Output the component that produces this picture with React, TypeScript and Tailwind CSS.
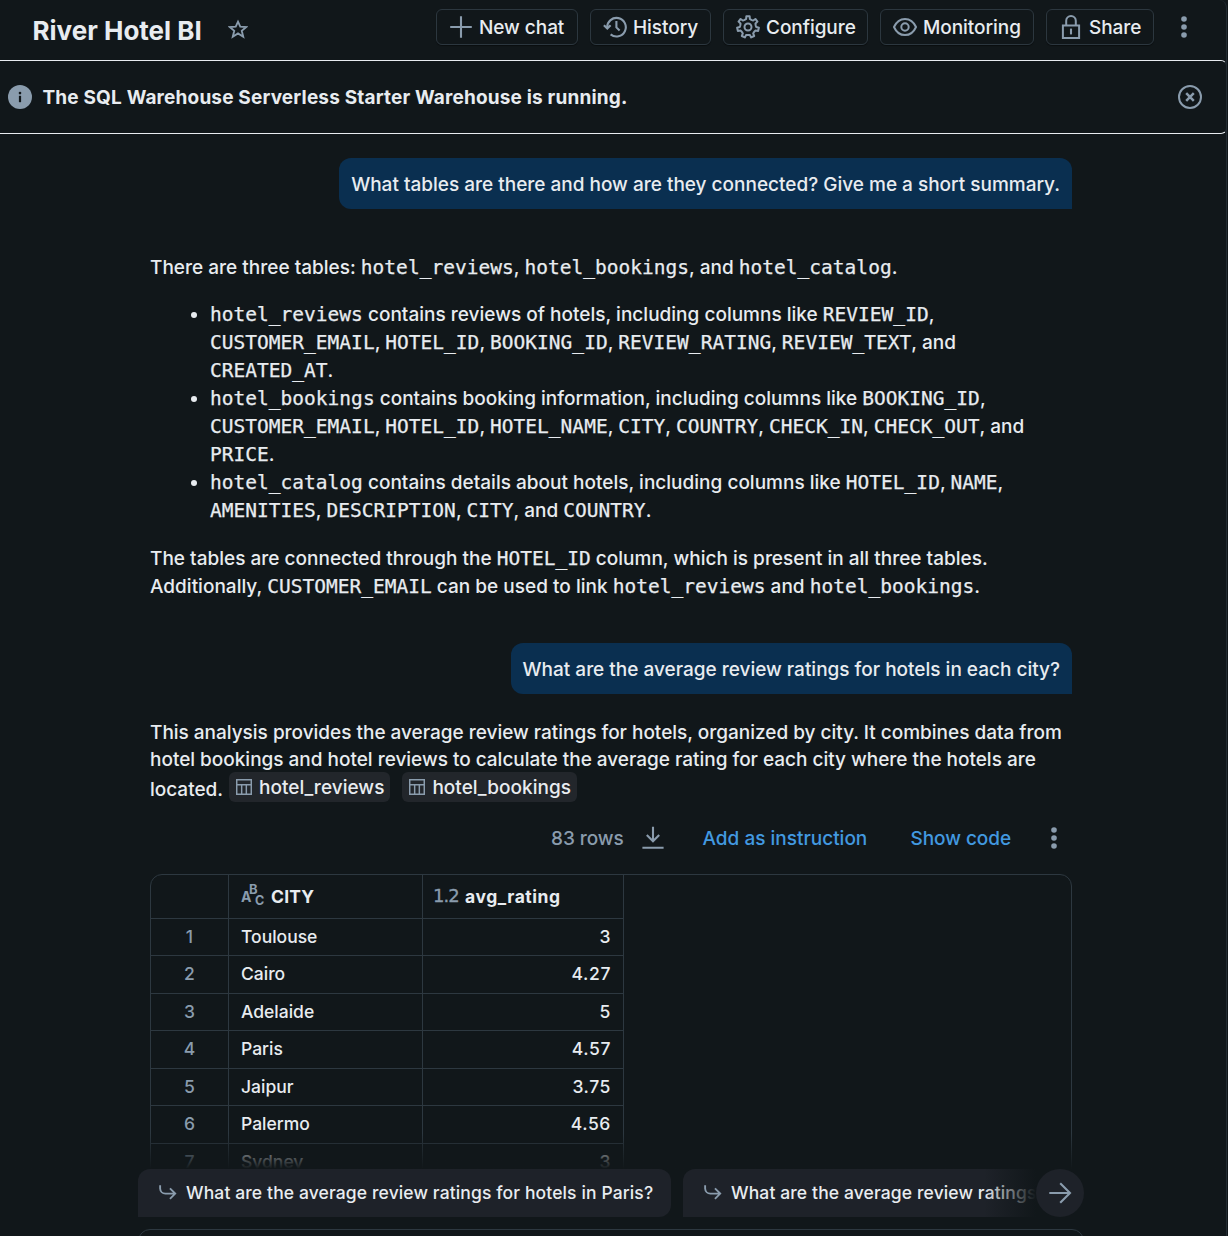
import React from 'react';

const GEAR_TEETH = 7;

function gearPath() {
  const step = (Math.PI * 2) / GEAR_TEETH;
  const profile: [number, number][] = [
    [-0.42, 7.9],
    [-0.25, 8.3],
    [-0.17, 10.9],
    [0.17, 10.9],
    [0.25, 8.3],
    [0.42, 7.9],
  ];
  const points: string[] = [];
  for (let i = 0; i < GEAR_TEETH; i += 1) {
    for (const [offset, radius] of profile) {
      const angle = -Math.PI / 2 + (i + offset) * step;
      points.push(`${(12 + radius * Math.cos(angle)).toFixed(2)} ${(12 + radius * Math.sin(angle)).toFixed(2)}`);
    }
  }
  return `M${points.join('L')}Z`;
}

const GEAR = gearPath();

function Icon({ children, className = 'size-6' }: { children: React.ReactNode; className?: string }) {
  return (
    <svg viewBox="0 0 24 24" fill="none" stroke="#8a9cad" strokeWidth="2.1" className={`${className} shrink-0`}>
      {children}
    </svg>
  );
}

const PlusIcon = () => (
  <Icon>
    <path d="M12 1.2V22.8M1.2 12H22.8" />
  </Icon>
);

const HistoryIcon = () => (
  <Icon>
    <path d="M4.2 12.5A9.3 9.3 0 1 1 7.6 19.4" />
    <path d="M0.9 10.2L4.3 13.6L7.6 10.2" />
    <path d="M13.4 6V12.4L16.6 15.6" />
  </Icon>
);

const GearIcon = () => (
  <Icon>
    <path d={GEAR} strokeWidth="2" strokeLinejoin="round" />
    <circle cx="12" cy="12" r="3.5" strokeWidth="2" />
  </Icon>
);

const EyeIcon = () => (
  <Icon>
    <path d="M1 12C3.2 7 7.2 3.9 12 3.9S20.8 7 23 12C20.8 17 16.8 20.1 12 20.1S3.2 17 1 12Z" strokeWidth="2" />
    <circle cx="12" cy="12" r="3.7" strokeWidth="2" />
  </Icon>
);

const LockIcon = () => (
  <Icon>
    <path d="M3.9 10.6H20.1V22.9H3.9Z" strokeWidth="2" />
    <path d="M7.2 10.6V5.8A4.8 4.8 0 0 1 16.8 5.8V10.6" strokeWidth="2" />
    <path d="M12 13.6V19.4" />
  </Icon>
);

const StarIcon = () => (
  <Icon className="size-5">
    <path
      d="M12 3.2L14.7 9.1L21.9 9.7L16.5 14.1L18.3 21.2L12 17.3L5.7 21.2L7.5 14.1L2.1 9.7L9.3 9.1Z"
      strokeWidth="2.2"
    />
  </Icon>
);

const KebabIcon = () => (
  <Icon>
    <g fill="#8a9cad" stroke="none">
      <circle cx="12" cy="4" r="2.8" />
      <circle cx="12" cy="12" r="2.8" />
      <circle cx="12" cy="20" r="2.8" />
    </g>
  </Icon>
);

const InfoIcon = () => (
  <Icon>
    <circle cx="12" cy="12" r="12" fill="#8a9cad" stroke="none" />
    <path d="M12 10.8V17.2" stroke="#11171a" strokeWidth="2.2" />
    <circle cx="12" cy="8.1" r="1.3" fill="#11171a" stroke="none" />
  </Icon>
);

const CloseCircleIcon = () => (
  <Icon>
    <circle cx="12" cy="12" r="11" strokeWidth="2" />
    <path d="M8.2 8.2L15.8 15.8M15.8 8.2L8.2 15.8" strokeWidth="2.5" />
  </Icon>
);

const TableIcon = () => (
  <Icon className="size-4">
    <path d="M1.1 1.1H22.9V22.9H1.1ZM1.1 8.6H22.9M8.5 8.6V22.9M15.5 8.6V22.9" strokeWidth="2.2" />
  </Icon>
);

const DownloadIcon = () => (
  <Icon>
    <path d="M12 0.8V15M5.8 9L12 15.2L18.2 9M1.4 21.8H22.6" />
  </Icon>
);

const ReturnIcon = () => (
  <Icon className="h-[18px] w-[20px]">
    <path d="M1.5 1.5V6A7 7 0 0 0 8.5 12.8H21.5M14.6 5.8L21.6 12.8L14.6 19.8" strokeWidth="2.5" />
  </Icon>
);

const ArrowRightIcon = () => (
  <Icon>
    <path d="M1.3 12H22M12.2 2.2L22 12L12.2 21.8" />
  </Icon>
);

const TextTypeIcon = () => (
  <svg
    viewBox="0 0 24 24"
    className="size-6 shrink-0 overflow-visible"
    fill="#8a9cad"
    fontFamily="Inter, sans-serif"
    fontWeight="700"
  >
    <text x="0" y="20.4" fontSize="14">A</text>
    <text x="8" y="12" fontSize="13">B</text>
    <text x="14" y="22.6" fontSize="12.5">C</text>
  </svg>
);

function HeaderButton({ icon, label, width }: { icon: React.ReactNode; label: string; width: string }) {
  return (
    <button
      className={`${width} flex h-9 items-center gap-[6px] rounded-md border border-[#2c373f] pl-3 text-[19px] font-medium tracking-[-0.05px] whitespace-nowrap shadow-[0_1px_1px_rgba(0,0,0,0.4)]`}
    >
      {icon}
      <span className="pt-[2px]">{label}</span>
    </button>
  );
}

function Code({ children }: { children: string }) {
  return (
    <code className="font-['DejaVu_Sans_Mono',monospace] text-[19.5px] leading-none tracking-[0.02px] [-webkit-text-stroke:0.25px_currentColor]">
      {children}
    </code>
  );
}

function CodeList({ items }: { items: string[] }) {
  return (
    <>
      {items.map((item, i) => (
        <React.Fragment key={item}>
          {i > 0 && ', '}
          <Code>{item}</Code>
        </React.Fragment>
      ))}
    </>
  );
}

function Bubble({ children }: { children: string }) {
  return (
    <div className="self-end rounded-xl rounded-br-none bg-[#0a2f50] pt-[13px] pr-[12px] pb-[11px] pl-[12px] text-[19px] leading-[27px] tracking-[-0.003px] whitespace-nowrap">
      {children}
    </div>
  );
}

function TableChip({ name }: { name: string }) {
  return (
    <span className="mr-3 inline-flex h-[30px] items-center gap-[7px] rounded-md bg-[#22262b] pr-1.5 pl-[7px] tracking-[0.03px]">
      <TableIcon />
      {name}
    </span>
  );
}

const rows: [string, string][] = [
  ['Toulouse', '3'],
  ['Cairo', '4.27'],
  ['Adelaide', '5'],
  ['Paris', '4.57'],
  ['Jaipur', '3.75'],
  ['Palermo', '4.56'],
  ['Sydney', '3'],
];

function ResultTable() {
  return (
    <div className="h-[420px] w-[922px] overflow-hidden rounded-xl border border-[#2d3840] text-[17.5px]">
      <div className="grid h-[43.5px] w-[473px] grid-cols-[78px_194px_201px]">
        <div className="border-r border-b border-[#2d3840]" />
        <div className="flex items-center gap-[6px] border-r border-b border-[#2d3840] pl-3 font-[650]">
          <div className="-mt-1">
            <TextTypeIcon />
          </div>
          <span className="pt-px tracking-[0.2px]">CITY</span>
        </div>
        <div className="flex items-center gap-[6px] border-r border-b border-[#2d3840] pl-[10px] font-[650]">
          <span className="-mt-0.5 w-[26px] font-['DejaVu_Sans',sans-serif] text-[18px] font-normal tracking-[-0.9px] text-[#8a9cad] [-webkit-text-stroke:0.3px_currentColor]">
            1.2
          </span>
          <span className="pt-px tracking-[0.55px]">avg_rating</span>
        </div>
      </div>
      {rows.map(([city, rating], i) => (
        <div key={city} className="grid h-[37.5px] w-[473px] grid-cols-[78px_194px_201px] leading-[36px]">
          <div className="border-r border-b border-[#2d3840] text-center text-[#8a9cad]">{i + 1}</div>
          <div className="border-r border-b border-[#2d3840] pl-3">{city}</div>
          <div className="border-r border-b border-[#2d3840] pr-3 text-right tracking-[0.6px]">{rating}</div>
        </div>
      ))}
    </div>
  );
}

function Suggestion({ text, className }: { text: string; className: string }) {
  return (
    <div
      className={`${className} flex h-12 shrink-0 items-center gap-[8px] rounded-xl rounded-bl-none bg-[#1e2229] pl-5 text-[17.5px] tracking-[0.12px] whitespace-nowrap`}
    >
      <ReturnIcon />
      {text}
    </div>
  );
}

export default function App() {
  return (
    <div className="h-[1236px] w-[1228px] overflow-hidden bg-[#11171a] font-['Inter',sans-serif] font-[450] text-[#e8ecf0]">
      <div className="flex h-[1236px] w-[1227px] flex-col rounded-tr-lg border-r border-[#232c33]">
        <header className="flex h-[60px] shrink-0 pl-[32.5px]">
          <h1 className="mt-[13px] w-[195px] text-[26px] leading-9 font-[650]">River Hotel BI</h1>
          <div className="mt-[19px]">
            <StarIcon />
          </div>
          <div className="mt-[9px] ml-auto flex gap-3">
            <HeaderButton icon={<PlusIcon />} label="New chat" width="w-[142px]" />
            <HeaderButton icon={<HistoryIcon />} label="History" width="w-[121px]" />
            <HeaderButton icon={<GearIcon />} label="Configure" width="w-[145px]" />
            <HeaderButton icon={<EyeIcon />} label="Monitoring" width="w-[154px]" />
            <HeaderButton icon={<LockIcon />} label="Share" width="w-[108px]" />
          </div>
          <div className="mt-[15px] mr-[30px] ml-[18px]">
            <KebabIcon />
          </div>
        </header>

        <div className="flex h-[74px] w-[1227px] shrink-0 items-center rounded-r-md border-y border-r border-y-[#e8ecf0] border-r-[#232c33] pr-[24px] pl-2">
          <InfoIcon />
          <p className="ml-[10.5px] pt-[2px] text-[19px] font-[660] tracking-[0.17px]">
            The SQL Warehouse Serverless Starter Warehouse is running.
          </p>
          <div className="ml-auto">
            <CloseCircleIcon />
          </div>
        </div>

        <main className="relative h-[1035px] shrink-0 overflow-hidden pl-[150px]">
          <div className="flex w-[922px] flex-col pt-6">
            <Bubble>What tables are there and how are they connected? Give me a short summary.</Bubble>

            <div className="mt-[45px] text-[19px] leading-7 tracking-[0.01px] whitespace-nowrap">
              <p>
                There are three tables: <CodeList items={['hotel_reviews', 'hotel_bookings']} />, and{' '}
                <Code>hotel_catalog</Code>.
              </p>
              <ul className="mt-[19px] list-disc pl-[60px]">
                <li>
                  <Code>hotel_reviews</Code> contains reviews of hotels, including columns like <Code>REVIEW_ID</Code>,
                  <br />
                  <CodeList items={['CUSTOMER_EMAIL', 'HOTEL_ID', 'BOOKING_ID', 'REVIEW_RATING', 'REVIEW_TEXT']} />, and
                  <br />
                  <Code>CREATED_AT</Code>.
                </li>
                <li>
                  <Code>hotel_bookings</Code> contains booking information, including columns like{' '}
                  <Code>BOOKING_ID</Code>,
                  <br />
                  <CodeList
                    items={['CUSTOMER_EMAIL', 'HOTEL_ID', 'HOTEL_NAME', 'CITY', 'COUNTRY', 'CHECK_IN', 'CHECK_OUT']}
                  />
                  , and
                  <br />
                  <Code>PRICE</Code>.
                </li>
                <li>
                  <Code>hotel_catalog</Code> contains details about hotels, including columns like{' '}
                  <CodeList items={['HOTEL_ID', 'NAME']} />,
                  <br />
                  <CodeList items={['AMENITIES', 'DESCRIPTION', 'CITY']} />, and <Code>COUNTRY</Code>.
                </li>
              </ul>
              <p className="mt-5">
                The tables are connected through the <Code>HOTEL_ID</Code> column, which is present in all three tables.
                <br />
                Additionally, <Code>CUSTOMER_EMAIL</Code> can be used to link <Code>hotel_reviews</Code> and{' '}
                <Code>hotel_bookings</Code>.
              </p>
            </div>

            <div className="mt-[42px] flex flex-col">
              <Bubble>What are the average review ratings for hotels in each city?</Bubble>
            </div>

            <div className="mt-[25px] text-[19px] leading-[27px] tracking-[-0.015px] whitespace-nowrap">
              This analysis provides the average review ratings for hotels, organized by city. It combines data from
              <br />
              hotel bookings and hotel reviews to calculate the average rating for each city where the hotels are
              <div className="-mt-px flex h-[31px] items-start">
                <span className="mt-[4px] w-[79px]">located.</span>
                <TableChip name="hotel_reviews" />
                <TableChip name="hotel_bookings" />
              </div>
            </div>

            <div className="mt-[19px] flex h-8 items-center pr-[6px] text-[19px]">
              <span className="ml-[401px] w-[90px] pt-[3px] tracking-[-0.05px] text-[#8a9cad]">83 rows</span>
              <DownloadIcon />
              <a className="ml-[37.5px] w-[208px] pt-[2px] text-[#4299e0]">Add as instruction</a>
              <a className="pt-[2px] tracking-[-0.05px] text-[#4299e0]">Show code</a>
              <div className="ml-auto">
                <KebabIcon />
              </div>
            </div>

            <div className="mt-[20px]">
              <ResultTable />
            </div>
          </div>
          <div className="absolute inset-x-0 bottom-0 h-9 bg-linear-to-b from-transparent to-[#11171a]" />
        </main>

        <footer className="ml-[138px] w-[946px]">
          <div className="relative flex h-12 gap-3 overflow-hidden">
            <Suggestion text="What are the average review ratings for hotels in Paris?" className="w-[533px]" />
            <Suggestion text="What are the average review ratings for hotels in Rome?" className="w-[533px]" />
            <div className="absolute inset-y-0 right-0 flex">
              <div className="w-[52px] bg-linear-to-r from-transparent to-[#11171a]" />
              <div className="bg-[#11171a]">
                <div className="flex size-12 items-center justify-center rounded-full bg-[#1e2229]">
                  <ArrowRightIcon />
                </div>
              </div>
            </div>
          </div>
          <div className="mt-3 h-20 rounded-xl border border-[#2d3840]" />
        </footer>
      </div>
    </div>
  );
}
